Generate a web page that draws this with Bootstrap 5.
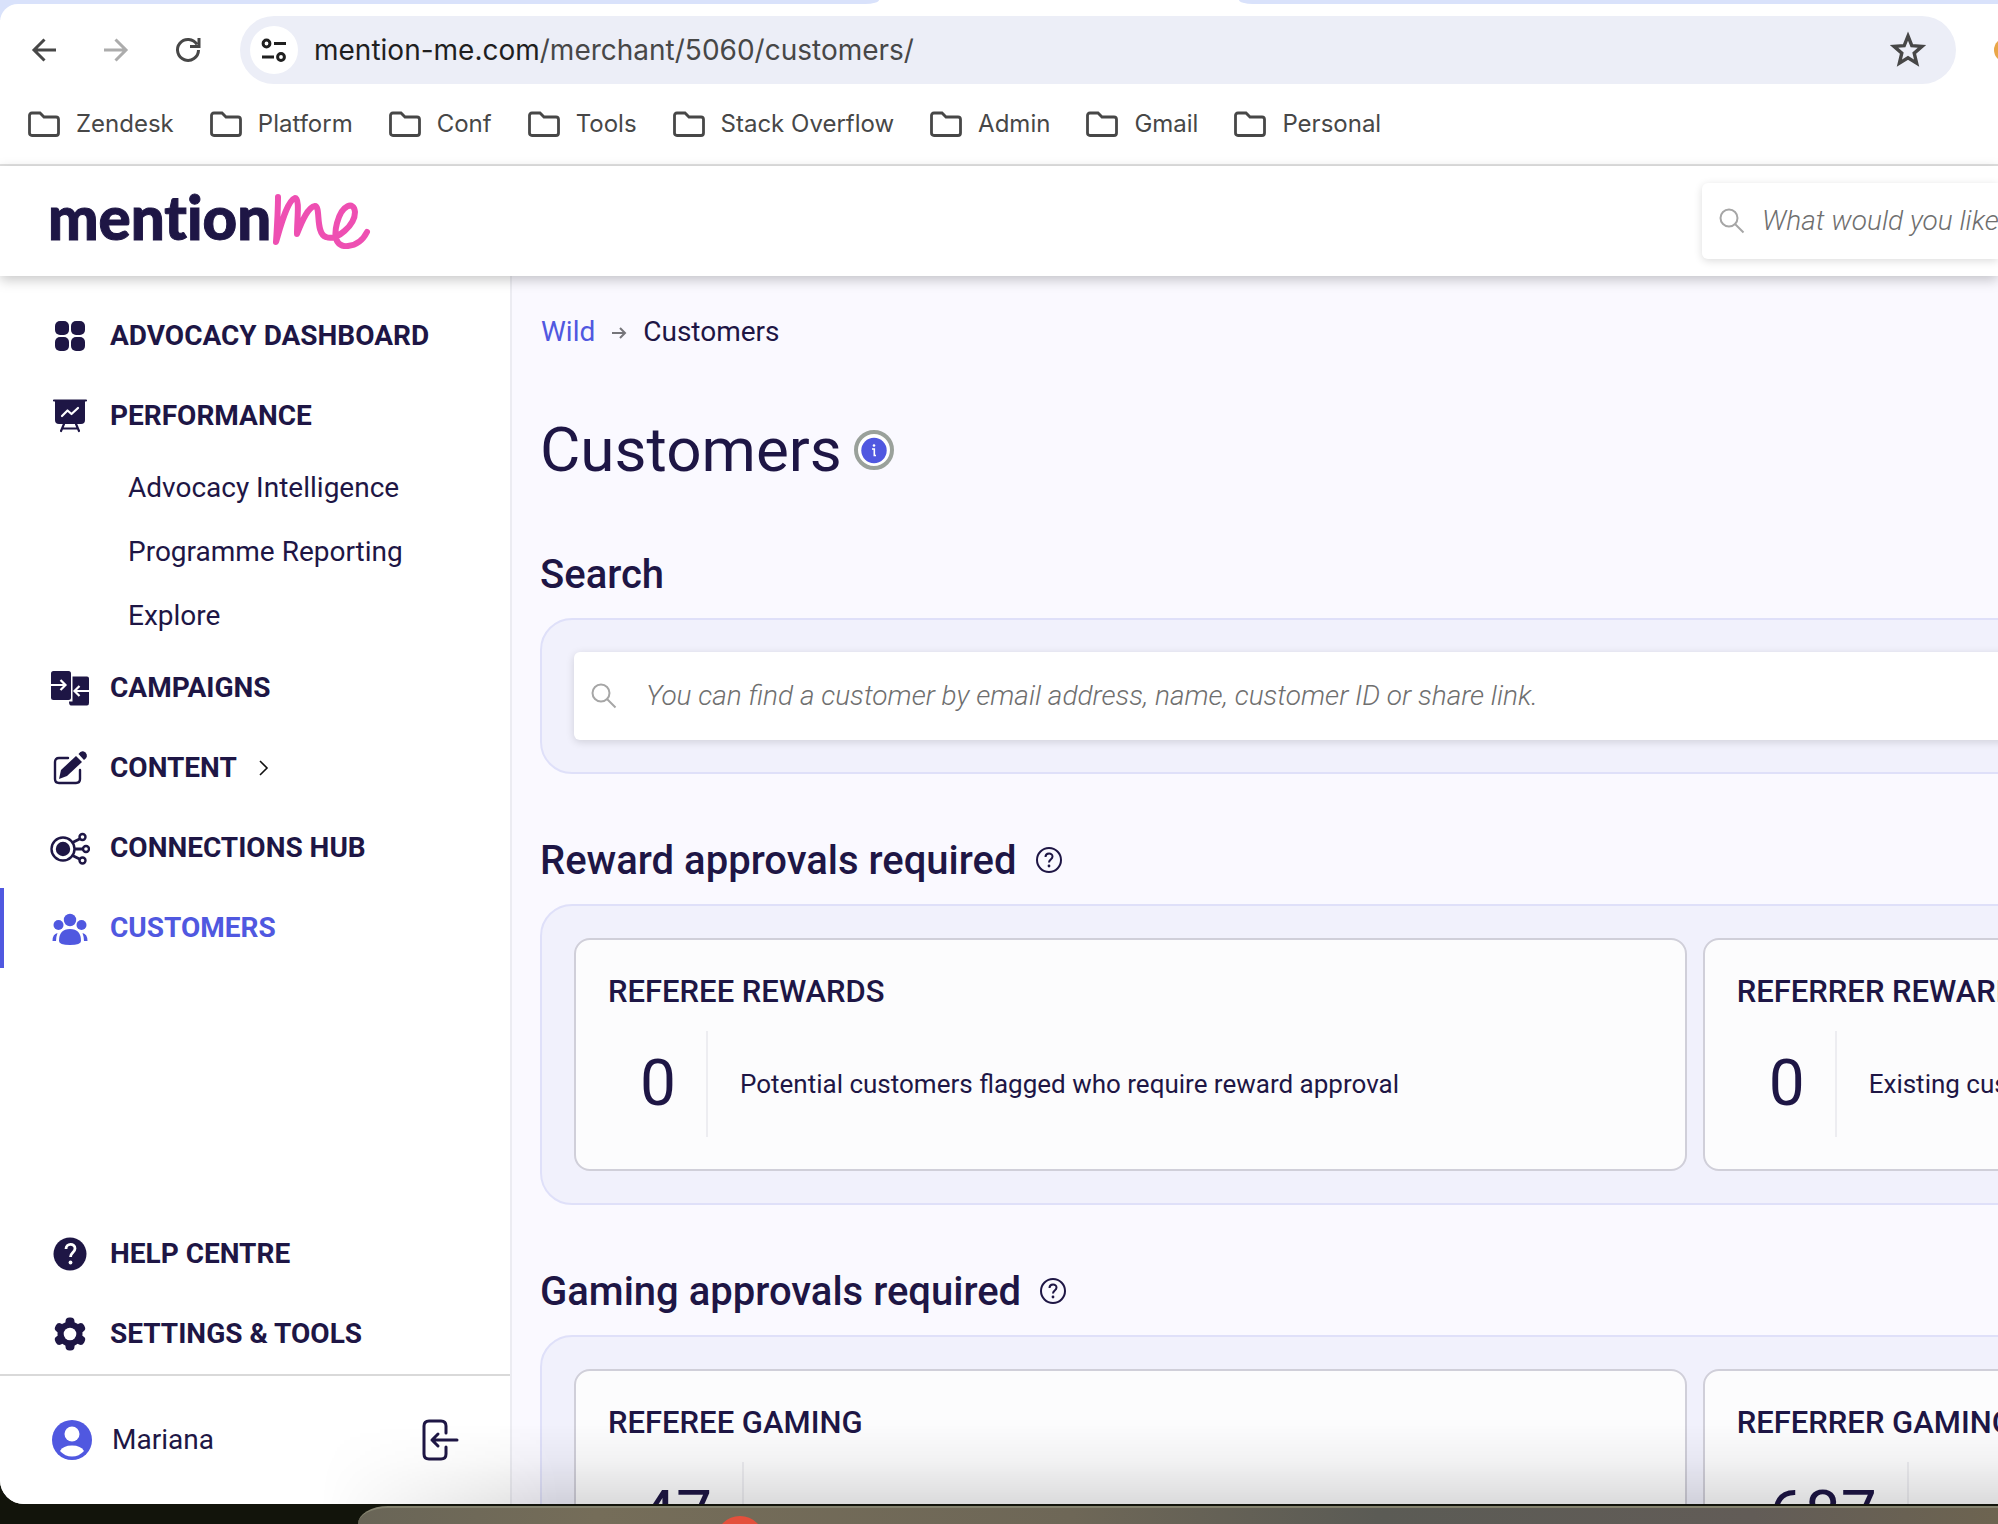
<!DOCTYPE html>
<html lang="en">
<head>
<meta charset="utf-8">
<meta name="viewport" content="width=device-width, initial-scale=1">
<title>Customers</title>
<link href="https://cdn.jsdelivr.net/npm/bootstrap@5.3.0/dist/css/bootstrap.min.css" rel="stylesheet">
<style>
:root{--ink:#1e1645;--brand:#5058e0;--chrome:#474747}
body{font-family:Roboto,"Liberation Sans",sans-serif;font-size:28px;line-height:40px;color:var(--ink);background:#12140b}
a{text-decoration:none;color:inherit}
svg{display:block;flex:none}
.desk{height:100vh;padding-bottom:20px}
.window-frame{border-radius:0 0 0 24px;background:#fff}
.strip{height:4px}
.strip-seg{background:#d9e2fb}
.strip-left{width:44%;border-bottom-right-radius:14px 4px}
.strip-gap{width:18%}
.strip-right{border-bottom-left-radius:14px 4px}
.chrome-bar{font-family:Inter,"Liberation Sans",sans-serif;color:var(--chrome);background:linear-gradient(#d9e2fb,#d9e2fb) 0 0/20px 20px no-repeat}
.toolbar{height:92px;padding:12px 0 12px 24px;background:#fff;border-top-left-radius:18px}
.tool-btn{border:0;background:none;padding:0;width:40px;height:40px;color:var(--chrome)}
.omni{height:68px;background:#eceef7;border-radius:34px;padding:0 28px 0 10px;margin:0 38px 0 8px}
.ext-clip{width:4px}
.site-btn{width:48px;height:48px;border:0;padding:0;border-radius:50%;background:#fff}
.url-box{border:0;background:none;color:var(--chrome);font-size:28px}
.url-box b{font-weight:400;color:#1f1f1f}
.bookmarks{padding:0 28px 12px;gap:36px;font-size:24px;border-bottom:2px solid #e1e1e1;box-sizing:content-box;height:56px}
.bookmarks a{gap:16px}
.topbar{height:110px;padding-left:48px;box-shadow:0 4px 12px rgba(0,0,0,.22);z-index:3}
.logo-link{padding-bottom:8px}
.wordmark{font-family:Lato,sans-serif;font-weight:900;font-size:60px;line-height:64px;font-variant-ligatures:none;-webkit-text-stroke:1px currentColor}
.find{background:#fff;box-shadow:0 2px 8px rgba(0,0,0,.14);border-radius:6px;color:#a6a6a6}
.find input{border:0;outline:0;background:none;font-style:italic;font-weight:300;font-size:28px;padding:0;min-width:0}
.find input::placeholder{color:#6f6f6f;opacity:1}
.find-top{width:296px;height:76px;padding-left:17px;gap:17px;border-radius:6px 0 0 6px}
.find-main{height:88px;padding-left:17px;gap:29px}
.side{width:512px;border-right:2px solid #ececf2;background:#fff}
.side-list{padding-top:20px}
.side-link{height:80px;padding-left:46px;gap:20px;border-left:4px solid transparent;font-weight:700;text-transform:uppercase}
.side-link.current{color:var(--brand);border-color:var(--brand)}
.sub-link{height:64px;padding-left:128px}
.user-bar{height:130px;border-top:2px solid #d9d9d9;padding:0 50px}
.user-bar a{gap:18px}
.user-bar button{border:0;background:none;padding:0;color:var(--ink)}
.page-area{background:#faf9ff}
.sheet{width:157.3%;padding:36px 0 0 28px}
.crumbs{height:40px;margin-bottom:58px;padding-left:1px;gap:16px}
.crumb-home{color:var(--brand)}
.title-row{height:80px;gap:12px;margin-bottom:61px}
.title-row h1{font-size:62px;line-height:80px;font-weight:400}
.info-btn{width:40px;height:40px;border:0;background:none;padding:0}
.head-row{height:48px;gap:18px;margin-bottom:19px}
.head-row h2{font-size:40px;line-height:48px;font-weight:500}
.panel{background:#f1f1fc;border:2px solid #dfe0f9;border-radius:32px;padding:32px;margin-bottom:63px;gap:16px}
.stat{flex:1 1 0;background:#fcfcfd;border:2px solid #d0cfd9;border-radius:16px;padding:32px;min-width:0}
.stat h3{font-size:31px;line-height:39px;font-weight:500;margin-bottom:20px;text-transform:uppercase}
.stat-num{font-size:64px;line-height:106px;padding:0 30px 0 32px;border-right:2px solid #ededf1}
.stat-text{font-size:26px;padding-left:32px}
.dock-shade{left:320px;right:-80px;bottom:0;height:80px;background:linear-gradient(rgba(0,0,0,0),rgba(0,0,0,.04) 45%,rgba(0,0,0,.13));-webkit-mask-image:linear-gradient(90deg,transparent,#000 240px);mask-image:linear-gradient(90deg,transparent,#000 240px);pointer-events:none;z-index:4}
.dock{left:358px;right:-60px;bottom:0;height:18px;border-top:2px solid #85836f;border-radius:40px 0 0 0/24px 0 0 0;background:linear-gradient(90deg,#696557,#756d59 14%,#6e6757 42%,#5b5b55 60%,#625c57 82%,#70664f)}
.dock-app{left:358px;bottom:-40px;width:48px;height:48px;border-radius:50%;background:#e4503c}
</style>
</head>
<body>
<svg class="d-none" xmlns="http://www.w3.org/2000/svg">
<symbol id="folder" viewBox="0 0 32 26"><path d="M4 2h8l4 4h12q2.500 0 2.500 2.500V22q0 2.500-2.500 2.500H4Q1.500 24.500 1.500 22V4.500Q1.500 2 4 2z" fill="none" stroke="currentColor" stroke-width="2.800"/></symbol>
<symbol id="lens" viewBox="0 0 26 26"><circle cx="10" cy="10" r="8.500" fill="none" stroke="currentColor" stroke-width="2"/><path d="M16 16l8.500 8.500" stroke="currentColor" stroke-width="2"/></symbol>
<symbol id="query" viewBox="0 0 28 28"><circle cx="14" cy="13" r="12" fill="none" stroke="currentColor" stroke-width="2"/><path d="M10.500 10c0-4.500 7-4.500 7-.5 0 3-3.500 3-3.500 6" fill="none" stroke="currentColor" stroke-width="2"/><circle cx="14" cy="19" r="1.400" fill="currentColor"/></symbol>
</svg>
<div class="desk position-relative overflow-hidden">
<div class="window-frame h-100 d-flex flex-column overflow-hidden position-relative">
  <header class="chrome-bar">
    <div class="strip d-flex"><span class="strip-seg strip-left"></span><span class="strip-gap"></span><span class="strip-seg strip-right flex-fill"></span></div>
    <div class="toolbar d-flex align-items-center">
      <button class="tool-btn me-4" aria-label="Back"><svg width="40" height="40" viewBox="0 0 40 40" fill="none" stroke="currentColor" stroke-width="3"><path d="M32 20H11M20.500 9.500L10 20l10.500 10.500"/></svg></button>
      <button class="tool-btn ms-2 me-4" aria-label="Forward"><svg width="40" height="40" viewBox="0 0 40 40" fill="none" stroke="#acacac" stroke-width="3"><path d="M8 20h21M19.500 9.500L30 20 19.500 30.500"/></svg></button>
      <button class="tool-btn ms-2 me-4" aria-label="Reload"><svg width="40" height="40" viewBox="0 0 40 40" fill="none" stroke="currentColor" stroke-width="3"><path d="M29 14.500A10.500 10.500 0 1 0 30.500 20M31 8v8.500h-9"/></svg></button>
      <div class="omni flex-fill d-flex align-items-center">
        <button class="site-btn" aria-label="Site information"><svg width="48" height="48" viewBox="0 0 48 48" fill="none" stroke="#1f1f1f" stroke-width="3"><circle cx="16.500" cy="17.500" r="3.400"/><path d="M24 17.500h12M12 31h12"/><circle cx="31" cy="31" r="3.400"/></svg></button>
        <div class="url-box ms-3 flex-fill"><b>mention-me.com</b>/merchant/5060/customers/</div>
        <button class="tool-btn" aria-label="Bookmark this page"><svg width="40" height="40" viewBox="0 0 40 40"><path d="M20 6l3.800 9.600 10.200.8-7.800 6.700 2.400 10L20 27.700l-8.600 5.400 2.400-10L6 16.400l10.200-.8z" fill="none" stroke="currentColor" stroke-width="3.400"/></svg></button>
      </div>
      <div class="ext-clip overflow-hidden"><svg width="24" height="24" viewBox="0 0 24 24"><circle cx="12" cy="12" r="12" fill="#e9a648"/></svg></div>
    </div>
    <nav class="bookmarks d-flex align-items-center" aria-label="Bookmarks">
      <a href="#" class="d-flex align-items-center"><svg width="32" height="26"><use href="#folder"/></svg>Zendesk</a>
      <a href="#" class="d-flex align-items-center"><svg width="32" height="26"><use href="#folder"/></svg>Platform</a>
      <a href="#" class="d-flex align-items-center"><svg width="32" height="26"><use href="#folder"/></svg>Conf</a>
      <a href="#" class="d-flex align-items-center"><svg width="32" height="26"><use href="#folder"/></svg>Tools</a>
      <a href="#" class="d-flex align-items-center"><svg width="32" height="26"><use href="#folder"/></svg>Stack Overflow</a>
      <a href="#" class="d-flex align-items-center"><svg width="32" height="26"><use href="#folder"/></svg>Admin</a>
      <a href="#" class="d-flex align-items-center"><svg width="32" height="26"><use href="#folder"/></svg>Gmail</a>
      <a href="#" class="d-flex align-items-center"><svg width="32" height="26"><use href="#folder"/></svg>Personal</a>
    </nav>
  </header>
  <div class="topbar d-flex align-items-center justify-content-between bg-white position-relative flex-shrink-0">
    <a href="#" class="logo-link d-flex align-items-center" aria-label="mention me"><span class="wordmark">mention</span><svg width="104" height="64" viewBox="0 0 104 64" fill="none" stroke="#ee4fb2" stroke-width="6" stroke-linecap="round" stroke-linejoin="round"><path d="M7 12C7 27 6 42 5 57C10 40 16 16 24 13C29 13 26 34 26 49C31 36 37 22 44 21C50 21 44 49 55 52C66 56 84 40 84 27C83 16 71 19 66 38C61 57 69 62 77 61C87 60 93 53 96 47"/></svg></a>
    <label class="find find-top d-flex align-items-center"><svg width="26" height="26"><use href="#lens"/></svg><input class="flex-fill" type="text" placeholder="What would you like to do?" aria-label="What would you like to do?"></label>
  </div>
  <div class="d-flex flex-fill overflow-hidden">
    <aside class="side flex-shrink-0 d-flex flex-column">
      <nav class="side-list flex-fill">
        <a href="#" class="side-link d-flex align-items-center"><svg width="40" height="40" viewBox="0 0 40 40" fill="currentColor"><rect x="5" y="5" width="14" height="14" rx="5"/><rect x="21" y="5" width="14" height="14" rx="5"/><rect x="5" y="21" width="14" height="14" rx="5"/><rect x="21" y="21" width="14" height="14" rx="5"/></svg>Advocacy Dashboard</a>
        <a href="#" class="side-link d-flex align-items-center"><svg width="40" height="40" viewBox="0 0 40 40" fill="none" stroke-linecap="round" stroke-linejoin="round"><path d="M5 4h30v20q0 4-4 4H9q-4 0-4-4z" fill="currentColor"/><path d="M4 4.500h32M14 28l-3 7M26 28l3 7M13 32.500h14" stroke="currentColor" stroke-width="2.200"/><path d="M12 20l5.500-5.500 4 3.500 6.500-6" stroke="#fff" stroke-width="2.200"/></svg>Performance</a>
        <a href="#" class="sub-link d-flex align-items-center">Advocacy Intelligence</a>
        <a href="#" class="sub-link d-flex align-items-center">Programme Reporting</a>
        <a href="#" class="sub-link d-flex align-items-center">Explore</a>
        <a href="#" class="side-link d-flex align-items-center"><svg width="40" height="40" viewBox="0 0 40 40" fill="none"><rect x="1" y="3" width="20" height="29" rx="2.500" fill="currentColor"/><path d="M22.500 8.500H37q2 0 2 2V35q0 2.500-2 2.500H21q-2 0-2-4h3.500z" fill="currentColor"/><path d="M1 17h14M10.500 12l5 5-5 5M39 23H25M29.500 18l-5 5 5 5" stroke="#fff" stroke-width="2.200"/></svg>Campaigns</a>
        <a href="#" class="side-link d-flex align-items-center"><svg width="40" height="40" viewBox="0 0 40 40" fill="none" stroke="currentColor" stroke-width="2.400" stroke-linecap="round"><path d="M18 10H9q-4 0-4 4v17q0 4 4 4h17q4 0 4-4v-9"/><path d="M9 31l2-9L26 8l6 6-15 14z" fill="currentColor" stroke="none"/><path d="M28.500 6q3-4.500 7-1.500Q39 8.500 34 12z" fill="currentColor" stroke="none"/></svg>Content<svg width="12" height="18" viewBox="0 0 12 18" fill="none" stroke="#111" stroke-width="1.600"><path d="M3 2l7 7-7 7"/></svg></a>
        <a href="#" class="side-link d-flex align-items-center"><svg width="40" height="40" viewBox="0 0 40 40" fill="none" stroke="currentColor" stroke-width="2.400"><circle cx="13" cy="21" r="11.500"/><circle cx="13" cy="21" r="6" fill="currentColor"/><circle cx="32.500" cy="9" r="3"/><circle cx="36" cy="21" r="3"/><circle cx="32.500" cy="32.500" r="3"/><path d="M22.500 14.500l8-4M25 21h8M22.500 27.500l8 4" stroke-width="2.800"/></svg>Connections Hub</a>
        <a href="#" class="side-link current d-flex align-items-center" aria-current="page"><svg width="40" height="40" viewBox="0 0 40 40" fill="currentColor"><circle cx="20" cy="12" r="6.200"/><circle cx="8.500" cy="17" r="5"/><circle cx="31.500" cy="17" r="5"/><path d="M9 33q0-12 11-12t11 12q0 4-11 4T9 33zM2.500 33q0-7 5-8-1.500 4-1.500 8zM37.500 33q0-7-5-8 1.500 4 1.500 8z"/></svg>Customers</a>
      </nav>
      <nav>
        <a href="#" class="side-link d-flex align-items-center"><svg width="40" height="40" viewBox="0 0 40 40" fill="none"><circle cx="20" cy="20" r="16.500" fill="currentColor"/><path d="M16 15c0-6 9-6 9-.5 0 4-4.500 4-4.500 8.500" stroke="#fff" stroke-width="2.800"/><circle cx="20.500" cy="28.500" r="1.900" fill="#fff"/></svg>Help Centre</a>
        <a href="#" class="side-link d-flex align-items-center"><svg width="40" height="40" viewBox="0 0 40 40"><g fill="currentColor"><circle cx="20" cy="20" r="12.500"/><rect x="15.500" y="3.500" width="9" height="33" rx="4"/><rect x="15.500" y="3.500" width="9" height="33" rx="4" transform="rotate(60 20 20)"/><rect x="15.500" y="3.500" width="9" height="33" rx="4" transform="rotate(120 20 20)"/></g><circle cx="20" cy="20" r="6.300" fill="#fff"/></svg>Settings &amp; Tools</a>
        <div class="user-bar d-flex align-items-center justify-content-between">
          <a href="#" class="d-flex align-items-center"><svg width="44" height="44" viewBox="0 0 44 44"><circle cx="22" cy="22" r="20" fill="#5058e0"/><circle cx="22" cy="16" r="7.500" fill="#fff"/><path d="M10 33q3-5.500 12-5.500T34 33q-5 5.500-12 5.500T10 33z" fill="#fff"/></svg>Mariana</a>
          <button aria-label="Log out"><svg width="44" height="44" viewBox="0 0 44 44" fill="none" stroke="currentColor" stroke-width="3" stroke-linecap="round" stroke-linejoin="round"><path d="M30 15V8q0-5-5-5H13Q8 3 8 8v28q0 5 5 5h12q5 0 5-5v-7M41 22H16M22 16l-6 6 6 6"/></svg></button>
        </div>
      </nav>
    </aside>
    <main class="page-area flex-fill overflow-hidden">
      <div class="sheet">
        <nav class="crumbs d-flex align-items-center" aria-label="Breadcrumb"><a href="#" class="crumb-home">Wild</a><svg width="16" height="16" viewBox="0 0 16 16" fill="none" stroke="#75757a" stroke-width="2"><path d="M1 9h13M9 4l5 5-5 5"/></svg><span>Customers</span></nav>
        <div class="title-row d-flex align-items-center"><h1 class="m-0">Customers</h1><button class="info-btn" aria-label="About customers"><svg width="40" height="40" viewBox="0 0 40 40"><circle cx="20" cy="20" r="18" fill="#fff" stroke="#9aa19b" stroke-width="4"/><circle cx="20" cy="20.500" r="12.700" fill="#5058e0"/><circle cx="20" cy="15.500" r="1.300" fill="#fff"/><path d="M18 19h2.300v6.500h1.700" fill="none" stroke="#fff" stroke-width="1.600"/></svg></button></div>
        <div class="head-row d-flex align-items-center"><h2 class="m-0">Search</h2></div>
        <section class="panel"><label class="find find-main d-flex align-items-center"><svg width="26" height="26"><use href="#lens"/></svg><input class="flex-fill" type="text" placeholder="You can find a customer by email address, name, customer ID or share link." aria-label="Find a customer"></label></section>
        <div class="head-row d-flex align-items-center"><h2 class="m-0">Reward approvals required</h2><svg width="28" height="28"><use href="#query"/></svg></div>
        <section class="panel d-flex">
          <article class="stat"><h3>Referee rewards</h3><div class="d-flex align-items-center"><div class="stat-num">0</div><div class="stat-text">Potential customers flagged who require reward approval</div></div></article>
          <article class="stat"><h3>Referrer rewards</h3><div class="d-flex align-items-center"><div class="stat-num">0</div><div class="stat-text">Existing customers flagged who require reward approval</div></div></article>
        </section>
        <div class="head-row d-flex align-items-center"><h2 class="m-0">Gaming approvals required</h2><svg width="28" height="28"><use href="#query"/></svg></div>
        <section class="panel d-flex">
          <article class="stat"><h3>Referee gaming</h3><div class="d-flex align-items-center"><div class="stat-num">47</div></div></article>
          <article class="stat"><h3>Referrer gaming</h3><div class="d-flex align-items-center"><div class="stat-num">687</div></div></article>
        </section>
      </div>
    </main>
  </div>
  <div class="dock-shade position-absolute"></div>
</div>
<div class="dock position-absolute overflow-hidden"><span class="dock-app position-absolute"></span></div>
</div>
<script src="https://cdn.jsdelivr.net/npm/bootstrap@5.3.0/dist/js/bootstrap.bundle.min.js"></script>
</body>
</html>
